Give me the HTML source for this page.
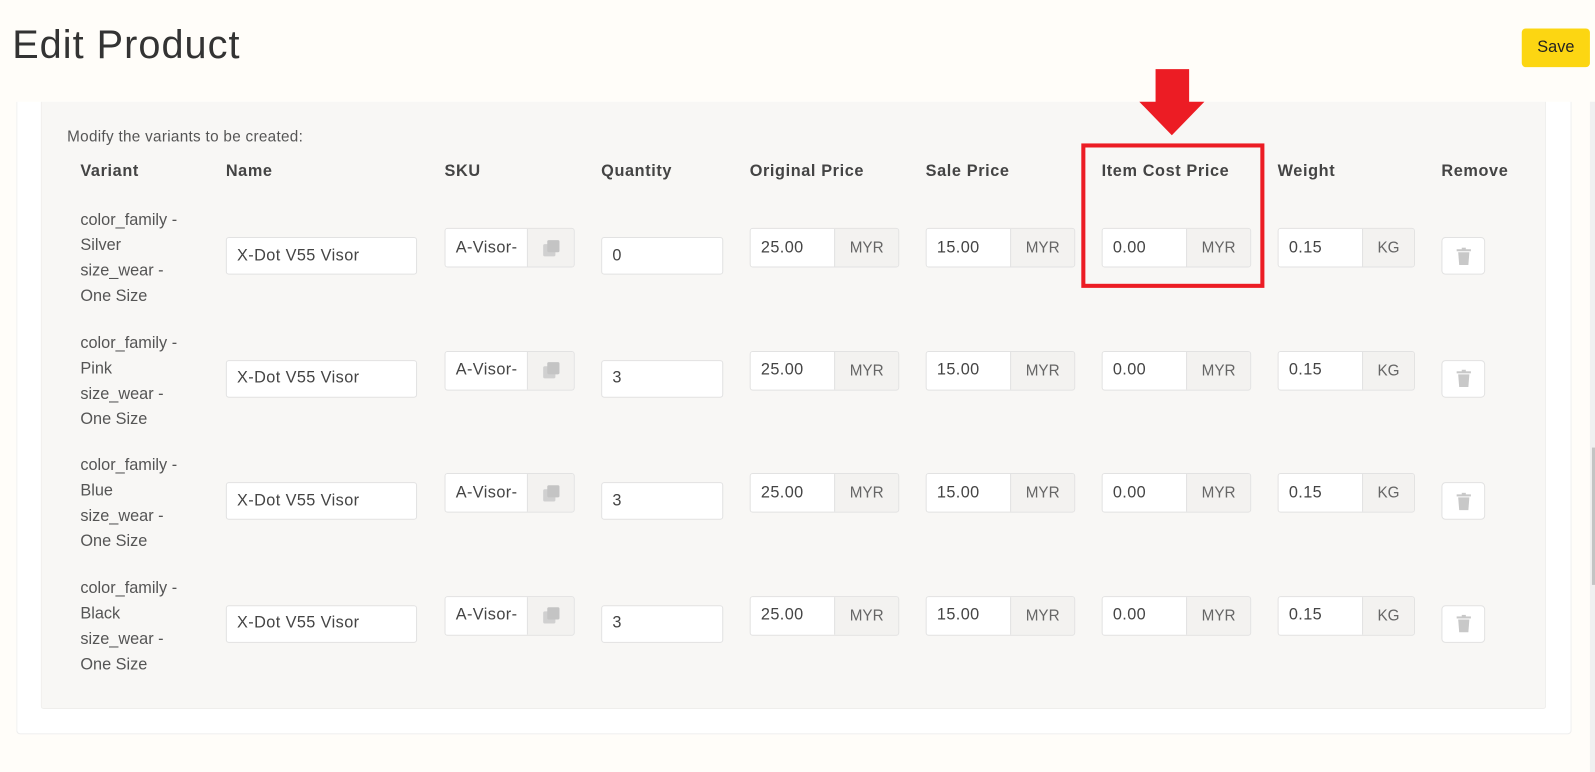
<!DOCTYPE html>
<html><head><meta charset="utf-8"><style>
*{box-sizing:border-box;margin:0;padding:0}
body{width:1595px;height:759px;background:#fffdf9;font-family:"Liberation Sans",sans-serif;color:#444;position:relative;overflow:hidden}
#wrap{position:absolute;left:0;top:0;width:1568px;height:746px;transform:scale(1.01722);transform-origin:0 0}
.abs{position:absolute}
h1{position:absolute;left:12px;top:23px;font-size:39px;font-weight:normal;color:#333;letter-spacing:1px}
.save{left:1496px;top:28px;width:67px;height:38px;background:#fcd612;border-radius:4px;font-size:16px;color:#222;text-align:center;line-height:38px}
.card{left:16px;top:100px;width:1529px;height:622px;background:#fff;border:1px solid #eee;border-top:none;border-radius:0 0 4px 4px}
.panel{left:40px;top:100px;width:1480px;height:597px;background:#f8f7f5;border:1px solid #efeeec;border-top:none;border-radius:0 0 3px 3px}
.hdr{font-size:16px;font-weight:bold;color:#444;top:160px;letter-spacing:0.6px}
.var{font-size:16px;line-height:25px;color:#555;left:79px}
.inp{background:#fff;border:1px solid #e2e2e2;border-radius:3px;font-size:16px;color:#444;padding-left:10px;display:flex;align-items:center;letter-spacing:0.4px}
.grp{display:flex;border:1px solid #e2e2e2;border-radius:3px;height:39px;overflow:hidden}
.grp .t{background:#fff;flex:1;padding-left:10px;display:flex;align-items:center;font-size:16px;color:#444;letter-spacing:0.4px}
.grp .a{background:#f3f2f0;border-left:1px solid #e2e2e2;display:flex;align-items:center;justify-content:center;font-size:15px;color:#666}
.trash{width:43px;height:37px;background:#fff;border:1px solid #e2e2e2;border-radius:4px;display:flex;align-items:center;justify-content:center}
</style></head><body>
<div id="wrap">
<h1>Edit Product</h1>
<div class="abs save">Save</div>
<div class="abs" style="left:1563px;top:100px;width:6px;height:659px;background:#f0f0f0"></div>
<div class="abs" style="left:1565px;top:440px;width:3px;height:135px;background:#c4c4c4"></div>
<div class="abs card"></div>
<div class="abs panel"></div>
<div class="abs" style="left:66px;top:126px;font-size:15px;color:#555;letter-spacing:0.3px">Modify the variants to be created:</div>
<div class="abs hdr" style="left:79px">Variant</div>
<div class="abs hdr" style="left:222px">Name</div>
<div class="abs hdr" style="left:437px">SKU</div>
<div class="abs hdr" style="left:591px">Quantity</div>
<div class="abs hdr" style="left:737px">Original Price</div>
<div class="abs hdr" style="left:910px">Sale Price</div>
<div class="abs hdr" style="left:1083px">Item Cost Price</div>
<div class="abs hdr" style="left:1256px">Weight</div>
<div class="abs hdr" style="left:1417px">Remove</div>

<div id="rows"></div>
<div class="abs" style="left:1063px;top:141px;width:180px;height:142px;border:4px solid #ec1c24"></div>
<svg class="abs" style="left:1100px;top:66px" width="100" height="70"><path d="M36 2h33v32h15l-32 33l-32-33h16z" fill="#ec1c24"/></svg>
</div>
<script>
var colors=["Silver","Pink","Blue","Black"],qty=["0","3","3","3"],h="";
var trash='<svg width="16" height="18" viewBox="0 0 16 18"><rect x="1" y="2" width="14" height="2" fill="#c8c8c8"/><rect x="6" y="0.5" width="4" height="2" fill="#c8c8c8"/><path d="M2.5 5h11l-1 12.5h-9z" fill="#c8c8c8"/></svg>';
var copy='<svg width="18" height="18" viewBox="0 0 18 18"><rect x="1" y="5" width="12" height="12" rx="1.5" fill="#d0d0d0"/><rect x="5" y="1" width="12" height="12" rx="1.5" fill="#c4c4c4"/></svg>';
for(var i=0;i<4;i++){
 var c=244+i*120.5;
 h+='<div class="abs var" style="top:'+(c-40)+'px">color_family -<br>'+colors[i]+'<br>size_wear -<br>One Size</div>';
 h+='<div class="abs inp" style="left:222px;top:'+(c-11)+'px;width:188px;height:37px">X-Dot V55 Visor</div>';
 h+='<div class="abs grp" style="left:437px;top:'+(c-20)+'px;width:128px"><div class="t">A-Visor-</div><div class="a" style="width:46px">'+copy+'</div></div>';
 h+='<div class="abs inp" style="left:591px;top:'+(c-11)+'px;width:120px;height:37px">'+qty[i]+'</div>';
 [737,910,1083].forEach(function(x,j){
  h+='<div class="abs grp" style="left:'+x+'px;top:'+(c-20)+'px;width:147px"><div class="t">'+(j==2?"0.00":j==0?"25.00":"15.00")+'</div><div class="a" style="width:63px">MYR</div></div>';
 });
 h+='<div class="abs grp" style="left:1256px;top:'+(c-20)+'px;width:135px"><div class="t">0.15</div><div class="a" style="width:51px">KG</div></div>';
 h+='<div class="abs trash" style="left:1417px;top:'+(c-11)+'px">'+trash+'</div>';
}
document.getElementById("rows").innerHTML=h;
</script>
</body></html>
